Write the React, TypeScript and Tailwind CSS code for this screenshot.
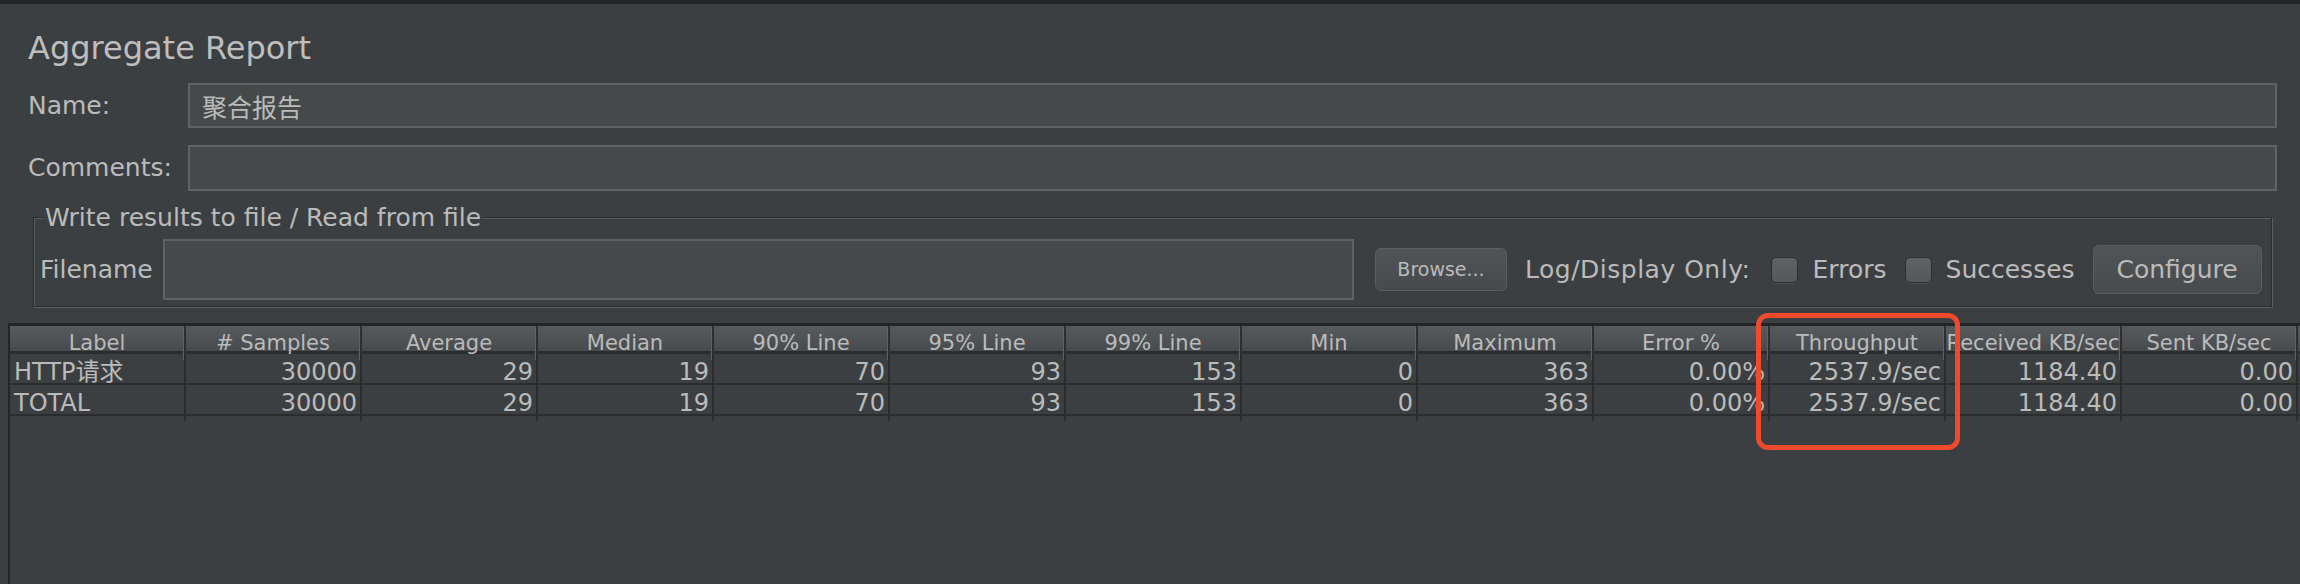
import React from "react";

// Aggregate Report panel (JMeter, Darcula look)
const columns = [
  "Label",
  "# Samples",
  "Average",
  "Median",
  "90% Line",
  "95% Line",
  "99% Line",
  "Min",
  "Maximum",
  "Error %",
  "Throughput",
  "Received KB/sec",
  "Sent KB/sec",
];

const rows = [
  ["HTTP请求", "30000", "29", "19", "70", "93", "153", "0", "363", "0.00%", "2537.9/sec", "1184.40", "0.00"],
  ["TOTAL", "30000", "29", "19", "70", "93", "153", "0", "363", "0.00%", "2537.9/sec", "1184.40", "0.00"],
];

function Checkbox() {
  return (
    <span className="inline-block w-[27px] h-[26px] shrink-0 rounded-[5px] border border-[#2c2e30] bg-linear-to-b from-[#5e6265] to-[#55585b] shadow-[0_1px_0_#4a4d50]" />
  );
}

export default function App() {
  return (
    <div className="relative w-[2300px] h-[584px] overflow-hidden bg-[#3c3f41] border-t-4 border-[#242527] text-[#bbbbbb] font-['DejaVu_Sans','Noto_Sans_CJK_SC',sans-serif] flex flex-col">
      {/* Header fields */}
      <div className="pl-[28px] pr-[23px] pt-[28px]">
        <h1 className="h-[32px] text-[32px] leading-[32px] text-[#bebebe] whitespace-nowrap">Aggregate Report</h1>

        <div className="mt-[19px] flex items-center h-[45px]">
          <span className="w-[160px] text-[25px]">Name:</span>
          <input
            readOnly
            defaultValue="聚合报告"
            className="flex-1 h-[45px] border-2 border-[#5f6264] bg-[#45494a] pl-[12px] text-[25px] text-[#bbbbbb] outline-none"
          />
        </div>

        <div className="mt-[17px] flex items-center h-[46px]">
          <span className="w-[160px] text-[25px]">Comments:</span>
          <input
            readOnly
            className="flex-1 h-[46px] border-2 border-[#5f6264] bg-[#45494a] outline-none"
          />
        </div>

        {/* Write results to file / Read from file */}
        <fieldset className="mt-[12px] ml-[5px] w-[2239px] border border-[#2b2d2f] shadow-[1px_1px_0_#5b5e61,inset_1px_1px_0_#5b5e61] pl-[6px] pb-[6px]">
          <legend className="ml-[3px] px-[2px] h-[28px] leading-[30px] text-[25px] bg-[#3c3f41] whitespace-nowrap">
            Write results to file / Read from file
          </legend>
          <div className="mt-[8px] flex items-center h-[61px] text-[25px] whitespace-nowrap">
            <span className="w-[123px]">Filename</span>
            <input
              readOnly
              className="w-[1191px] h-[61px] border-2 border-[#5f6264] bg-[#45494a] outline-none"
            />
            <button className="ml-[21px] w-[132px] h-[43px] rounded-[6px] border border-[#5a5e61] bg-linear-to-b from-[#505457] to-[#474a4d] text-[19px] text-[#bbbbbb]">
              Browse...
            </button>
            <span className="ml-[18px] tracking-[0.5px]">Log/Display Only:</span>
            <span className="ml-[20px] flex items-center">
              <Checkbox />
            </span>
            <span className="ml-[15px]">Errors</span>
            <span className="ml-[18px] flex items-center">
              <Checkbox />
            </span>
            <span className="ml-[14px]">Successes</span>
            <button className="ml-[18px] w-[169px] h-[49px] rounded-[6px] border border-[#5a5e61] bg-linear-to-b from-[#505457] to-[#484b4e] text-[25px] text-[#bbbbbb]">
              Configure
            </button>
          </div>
        </fieldset>
      </div>

      {/* Results table */}
      <div className="mt-[16px] ml-[8px] flex-1 border-l-2 border-t-[3px] border-[#232527] bg-[#3c3f41]">
        <div className="grid grid-cols-[repeat(13,176px)] h-[28px] border-b-[3px] border-[#2a2c2e] bg-linear-to-b from-[#585b5e] to-[#484b4e] text-[21px]">
          {columns.map((c) => (
            <div
              key={c}
              className="flex items-center justify-center pt-[2px] whitespace-nowrap border-r-2 border-[#2d2f31] shadow-[inset_-1px_0_0_#5f6265]"
            >
              {c}
            </div>
          ))}
        </div>
        {rows.map((r, ri) => (
          <div
            key={ri}
            className="grid grid-cols-[repeat(13,176px)] h-[31px] border-b-2 border-[#2a2c2e] text-[24px]"
          >
            {r.map((v, i) => (
              <div
                key={i}
                className={
                  i === 0
                    ? "flex items-center whitespace-nowrap border-r-2 border-[#2a2c2e] pl-[4px]"
                    : "flex items-center justify-end whitespace-nowrap border-r-2 border-[#2a2c2e] pr-[3px]"
                }
              >
                {v}
              </div>
            ))}
          </div>
        ))}
      </div>

      {/* Highlight drawn over the Throughput column */}
      <div className="absolute left-[1756px] top-[309px] w-[204px] h-[137px] rounded-[12px] border-[5px] border-[#ef4a2b]" />
    </div>
  );
}
